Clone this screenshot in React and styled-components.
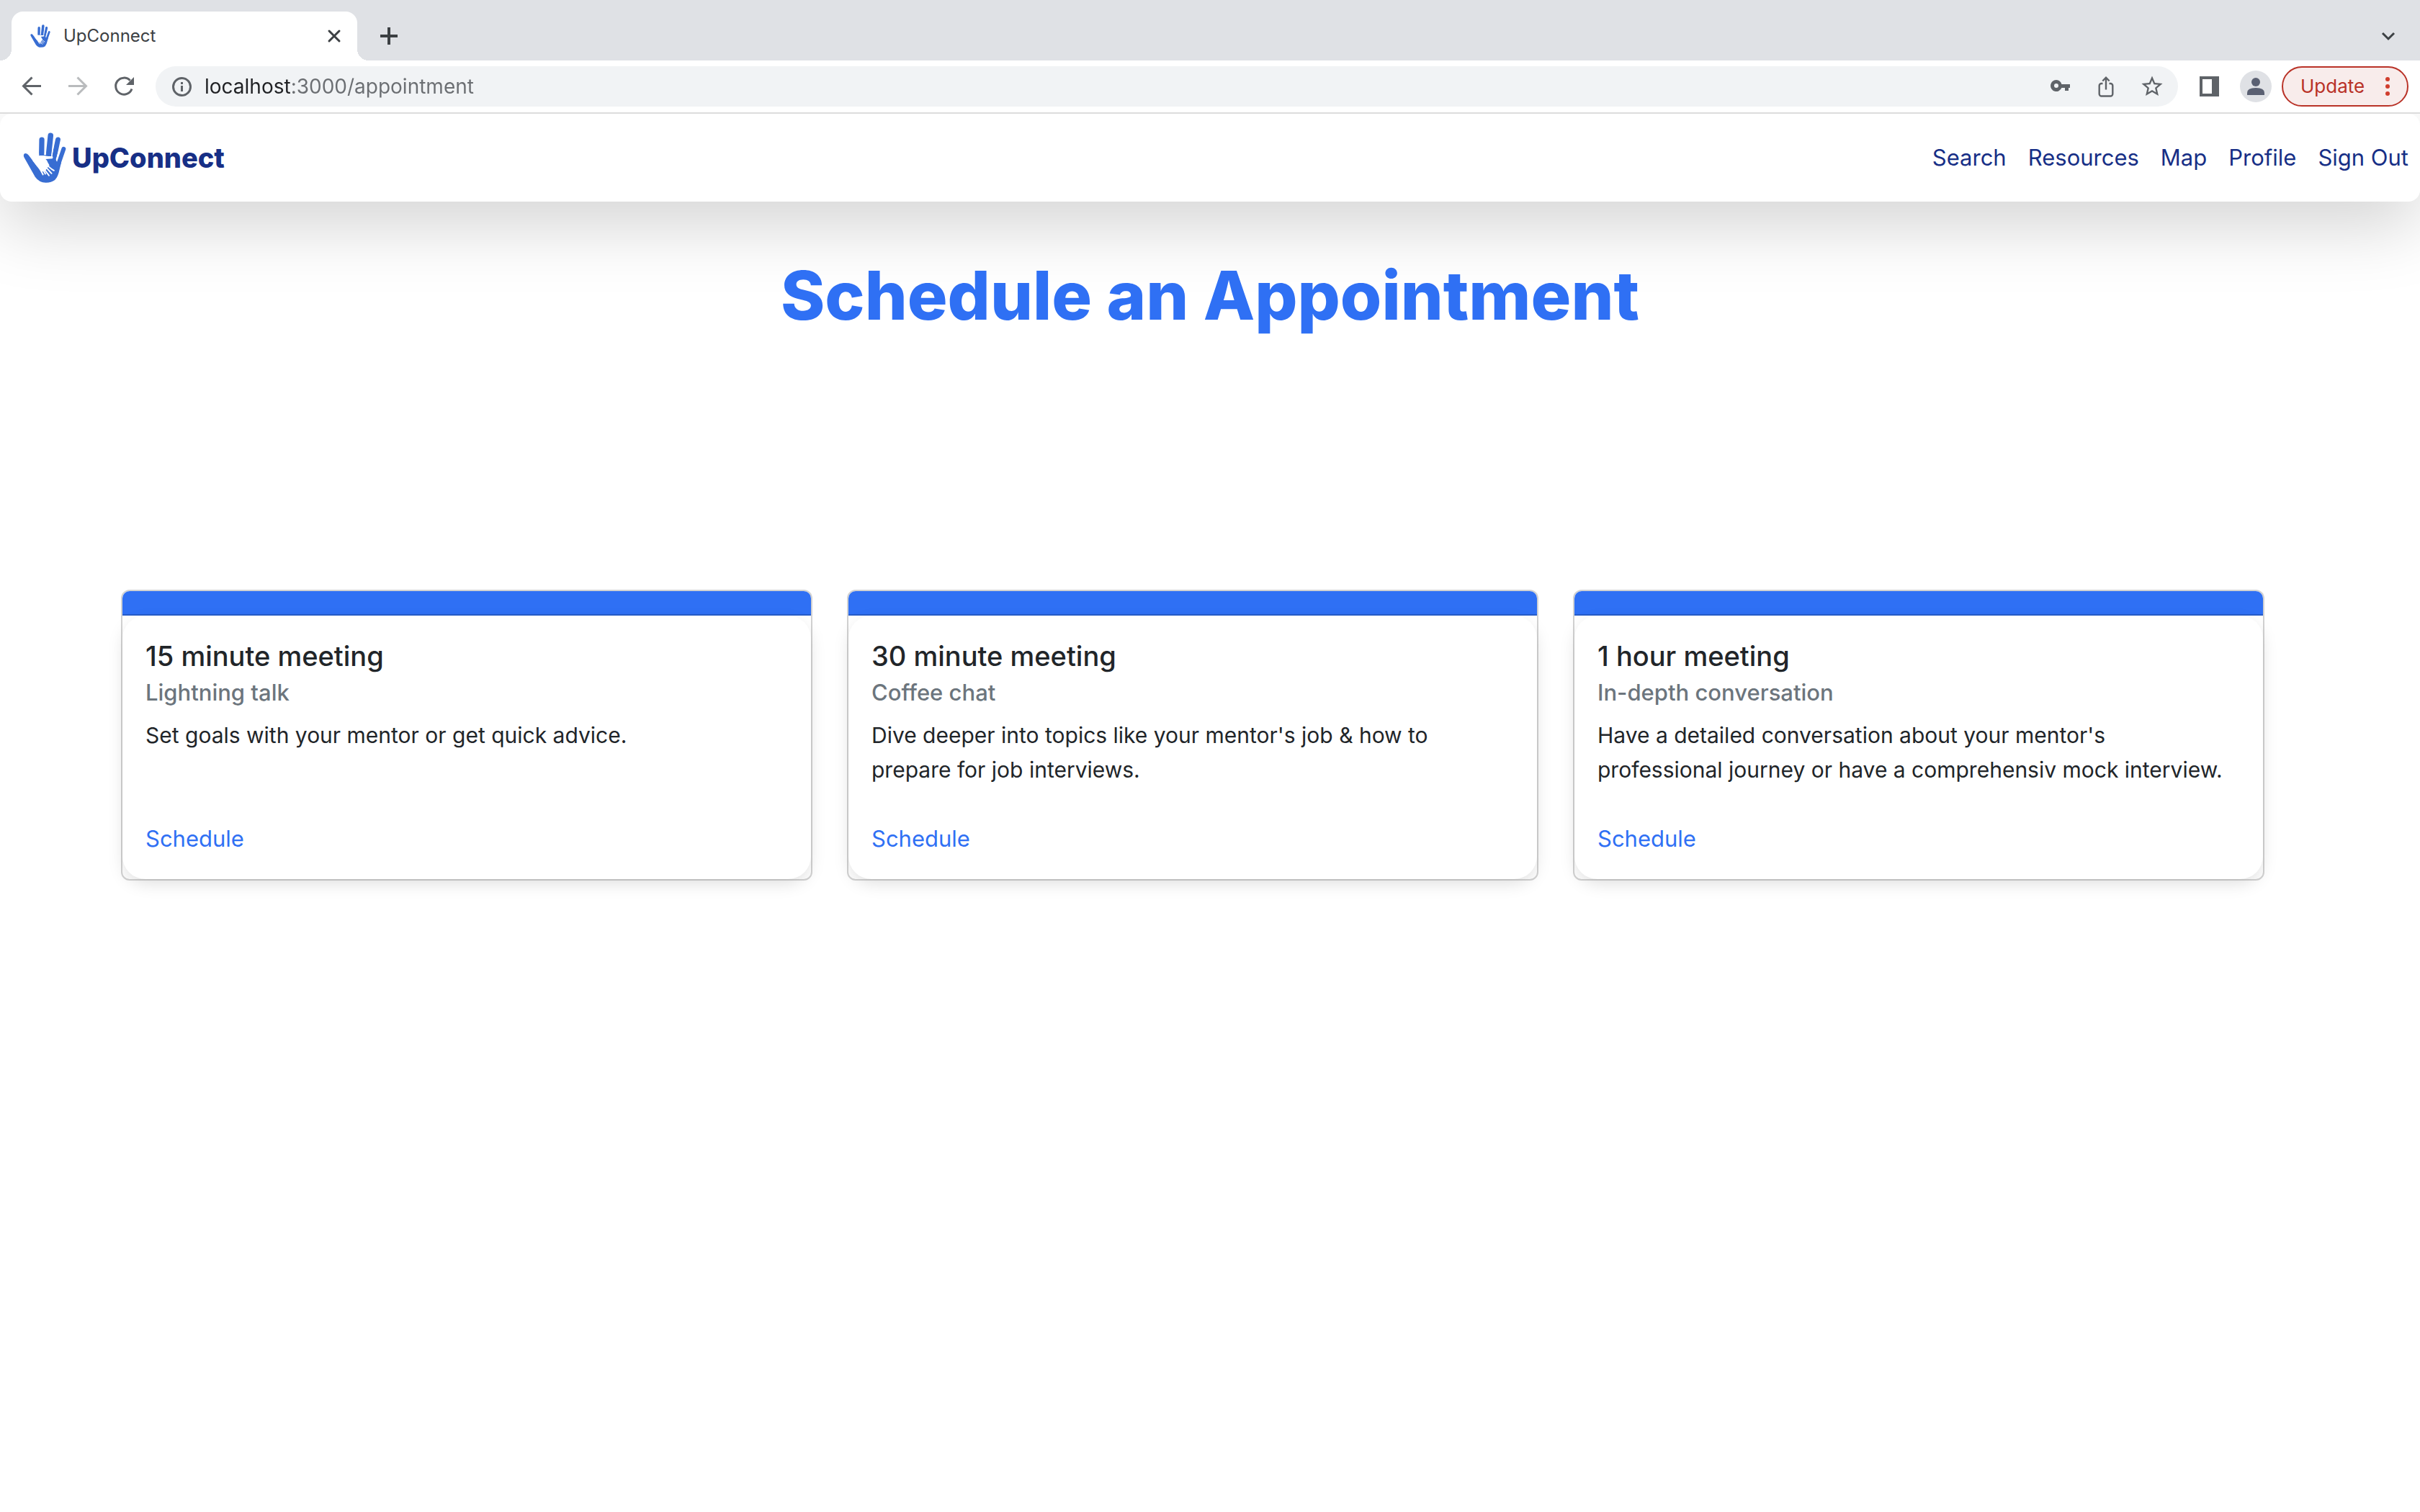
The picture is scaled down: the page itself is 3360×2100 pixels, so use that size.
import React, { useState } from 'react';
import styled, { createGlobalStyle } from 'styled-components';

const colors = {
  blue: '#2f70f4',
  navy: '#172f86',
  hand: '#386dd2',
  text: '#212529',
  muted: '#6c757d',
  chromeGray: '#dfe1e5',
  chromeIcon: '#5f6368',
  chromeDark: '#3c4043',
  red: '#b93227',
};

const GlobalStyle = createGlobalStyle`
  *, *::before, *::after { box-sizing: border-box; }
  body {
    margin: 0;
    background: #fff;
    color: ${colors.text};
    font-family: Inter, Roboto, "Liberation Sans", sans-serif;
  }
  h1, h2, h3, p, ul { margin: 0; padding: 0; }
  svg { display: block; }
`;

const Browser = styled.div`
  display: flex;
  flex-direction: column;
  min-height: 100vh;
`;

const Chrome = styled.header`
  position: relative;
  z-index: 2;
  background: #fff;
  border-bottom: 2px solid #dcdcdc;
`;

const TabStrip = styled.div`
  display: flex;
  align-items: center;
  height: 84px;
  padding: 16px 28px 0 16px;
  background: ${colors.chromeGray};
`;

const Tab = styled.div`
  position: relative;
  display: flex;
  align-items: center;
  gap: 18px;
  width: 480px;
  height: 68px;
  padding: 0 16px 0 26px;
  background: #fff;
  border-radius: 16px 16px 0 0;

  &::before,
  &::after {
    content: '';
    position: absolute;
    bottom: 0;
    width: 16px;
    height: 16px;
  }
  &::before {
    right: 100%;
    background: radial-gradient(circle at 0 0, transparent 16px, #fff 16px);
  }
  &::after {
    left: 100%;
    background: radial-gradient(circle at 100% 0, transparent 16px, #fff 16px);
  }
`;

const TabTitle = styled.span`
  flex: 1;
  font-size: 24px;
  line-height: 32px;
  color: ${colors.chromeDark};
`;

const IconButton = styled.button`
  display: grid;
  place-items: center;
  width: 32px;
  height: 32px;
  padding: 0;
  border: 0;
  background: none;
  color: ${(p) => (p.$dark ? colors.chromeDark : colors.chromeIcon)};
  cursor: pointer;

  &:disabled { color: #b9bbbd; }
`;

const NewTab = styled(IconButton)`
  margin: 0 auto 0 28px;
`;

const Toolbar = styled.div`
  display: flex;
  align-items: center;
  height: 72px;
  padding-right: 16px;
`;

const HistoryButtons = styled.div`
  display: flex;
  gap: 32px;
  padding: 0 28px;
`;

const AddressBar = styled.div`
  display: flex;
  flex: 1;
  align-items: center;
  height: 56px;
  padding: 0 20px;
  border-radius: 28px;
  background: #f1f3f5;
`;

const AddressInput = styled.input`
  flex: 1;
  min-width: 0;
  height: 40px;
  margin-left: 16px;
  padding: 0;
  border: 0;
  outline: 0;
  font: 400 28px/40px Inter, Roboto, sans-serif;
  color: ${colors.chromeIcon};
  background: linear-gradient(90deg, #202124 122px, #6b6e72 122px);
  background-clip: text;
  -webkit-background-clip: text;
  -webkit-text-fill-color: transparent;
`;

const AddressActions = styled.div`
  display: flex;
  gap: 32px;
`;

const ProfileTools = styled.div`
  display: flex;
  align-items: center;
  gap: 26px;
  padding: 0 14px 0 28px;
`;

const Avatar = styled.button`
  display: grid;
  place-items: center;
  width: 44px;
  height: 44px;
  padding: 0;
  border: 0;
  border-radius: 50%;
  background: ${colors.chromeGray};
  color: #5a6072;
`;

const UpdateButton = styled.button`
  display: flex;
  align-items: center;
  justify-content: space-between;
  width: 176px;
  height: 56px;
  padding: 0 24px;
  border: 2px solid ${colors.red};
  border-radius: 28px;
  background: #f8eceb;
  font: 400 26px/32px Inter, Roboto, sans-serif;
  color: ${colors.red};
`;

const SiteNav = styled.nav`
  position: relative;
  display: flex;
  align-items: center;
  justify-content: space-between;
  height: 122px;
  padding: 0 16px 0 32px;
  border-radius: 16px;
  background: #fff;
  box-shadow: 0 32px 96px rgba(0, 0, 0, 0.175);
`;

const Brand = styled.a`
  display: flex;
  align-items: center;
  gap: 8px;
  font-size: 38px;
  font-weight: 800;
  line-height: 48px;
  color: ${colors.navy};
  text-decoration: none;
`;

const NavList = styled.ul`
  display: flex;
  gap: 30px;
  list-style: none;
`;

const NavLink = styled.a`
  font-size: 31px;
  line-height: 48px;
  color: ${colors.navy};
  text-decoration: none;
`;

const Main = styled.main`
  position: relative;
  padding-top: 72px;
`;

const PageTitle = styled.h1`
  font-size: 93px;
  font-weight: 800;
  line-height: 116px;
  text-align: center;
  color: ${colors.blue};
`;

const CardGrid = styled.section`
  display: grid;
  grid-template-columns: repeat(3, 1fr);
  gap: 48px;
  margin-top: 351px;
  padding: 0 216px 0 168px;
`;

const Card = styled.article`
  display: flex;
  flex-direction: column;
  border: 2px solid rgba(0, 0, 0, 0.176);
  border-radius: 12px;
  background: #fff;
`;

const CardHeader = styled.div`
  height: 34px;
  border-bottom: 2px solid rgba(0, 0, 0, 0.176);
  border-radius: 10px 10px 0 0;
  background: ${colors.blue};
`;

const CardBody = styled.div`
  display: flex;
  flex: 1;
  flex-direction: column;
  align-items: flex-start;
  padding: 32px;
  border-radius: 32px;
  background: #fff;
  box-shadow: 0 8px 24px -4px rgba(0, 0, 0, 0.15);
`;

const CardTitle = styled.h2`
  font-size: 38px;
  font-weight: 500;
  line-height: 48px;
`;

const CardSubtitle = styled.h3`
  margin: 8px 0 16px;
  font-size: 31px;
  font-weight: 500;
  line-height: 38px;
  color: ${colors.muted};
`;

const CardText = styled.p`
  flex: 1;
  margin-bottom: 48px;
  padding-right: 16px;
  font-size: 30px;
  line-height: 48px;
`;

const CardLink = styled.a`
  font-size: 31px;
  line-height: 48px;
  color: ${colors.blue};
  text-decoration: none;
`;

const Hand = ({ width, height }) => (
  <svg width={width} height={height} viewBox="36 24 182 212" preserveAspectRatio="none" aria-hidden="true">
    <path
      fill={colors.hand}
      d="M40 128Q35 113 47 112Q54 112 60 120L96 168L103 123L103 118L132 118L156 122L172 135L180 150L197 150L189 182Q184 209 170 224Q156 235 132 235Q104 235 87 211Z"
    />
    <g stroke={colors.hand} strokeLinecap="round" fill="none">
      <path strokeWidth="22" d="M115 55L114 112" />
      <path strokeWidth="23" d="M152 37L143 124" />
      <path strokeWidth="21" d="M183 54L166 135" />
      <path strokeWidth="18" d="M207 93Q197 122 184 160" />
    </g>
    <path fill="#fff" d="M90 121L128 121Q134 125 160 124Q164 130 160 134L131 136Q137 139 140 150L147 162L128 187L112 189L76 142Z" />
    <g stroke="#fff" strokeLinecap="round" strokeWidth="6" fill="none">
      <path d="M106 174L120 201" />
      <path d="M118 176L130 198" />
      <path d="M122 174L145 205" />
      <path d="M128 165L156 196" />
      <path d="M134 155Q147 174 166 184" />
    </g>
    <path stroke="#fff" strokeWidth="5" fill="none" d="M130 56L130 119" />
    <path stroke="#fff" strokeWidth="4" fill="none" d="M167 56L157 124" />
    <path stroke="#fff" strokeWidth="4" fill="none" d="M194 80L176 138" />
  </svg>
);

const Line = ({ size = 32, width = 3, d, cap = 'butt' }) => (
  <svg width={size} height={size} viewBox="0 0 32 32" fill="none" stroke="currentColor" strokeWidth={width} strokeLinecap={cap} aria-hidden="true">
    <path d={d} />
  </svg>
);

const ReloadIcon = () => (
  <svg width="32" height="32" viewBox="0 0 32 32" fill="none" aria-hidden="true">
    <path d="M27 19.5A11.5 11.5 0 1 1 24.6 7.8" stroke="currentColor" strokeWidth="3" />
    <path d="M30 3V14H19Z" fill="currentColor" />
  </svg>
);

const InfoIcon = () => (
  <svg width="32" height="32" viewBox="0 0 32 32" fill="none" aria-hidden="true">
    <circle cx="16.5" cy="16.5" r="12" stroke="currentColor" strokeWidth="3" />
    <path d="M16.5 15V23M16.5 10V13" stroke="currentColor" strokeWidth="3" />
  </svg>
);

const KeyIcon = () => (
  <svg width="32" height="32" viewBox="0 0 32 32" aria-hidden="true">
    <path
      fill="currentColor"
      fillRule="evenodd"
      d="M11 7a8 8 0 1 0 7.4 11H23v4h5v-4h2v-5H18.4A8 8 0 0 0 11 7Zm0 5a3 3 0 1 1 0 6a3 3 0 0 1 0-6Z"
    />
  </svg>
);

const ShareIcon = () => (
  <svg width="32" height="32" viewBox="0 0 32 32" fill="none" stroke="currentColor" strokeWidth="2.4" aria-hidden="true">
    <path d="M11.5 12H9.7a3 3 0 0 0-3 3V26.500a3 3 0 0 0 3 3H22.300a3 3 0 0 0 3-3V15a3 3 0 0 0-3-3H20.500M16 20.500V4M11.300 8.500L16 3.700L20.700 8.500" />
  </svg>
);

const StarIcon = () => (
  <svg width="32" height="32" viewBox="1 1 22 22" aria-hidden="true">
    <path
      fill="currentColor"
      d="M22 9.24l-7.19-.62L12 2 9.19 8.63 2 9.24l5.46 4.73L5.82 21 12 17.27 18.18 21l-1.63-7.03L22 9.24zM12 15.4l-3.76 2.27 1-4.28-3.32-2.88 4.38-.38L12 6.100l1.710 4.040 4.380.38-3.320 2.880 1 4.280L12 15.400z"
    />
  </svg>
);

const SidePanelIcon = () => (
  <svg width="32" height="32" viewBox="0 0 32 32" aria-hidden="true">
    <path fill="currentColor" fillRule="evenodd" d="M2 2H29V30H2ZM6 6V26H19V6Z" />
  </svg>
);

const PersonIcon = () => (
  <svg width="44" height="44" viewBox="0 0 44 44" fill="currentColor" aria-hidden="true">
    <circle cx="22" cy="16" r="6" />
    <path d="M10 34V31Q10 24 22 24T34 31V34Z" />
  </svg>
);

const DotsIcon = () => (
  <svg width="6" height="28" viewBox="0 0 6 28" fill="#d03d2d" aria-hidden="true">
    <circle cx="3" cy="4" r="3" />
    <circle cx="3" cy="14" r="3" />
    <circle cx="3" cy="24" r="3" />
  </svg>
);

const links = ['Search', 'Resources', 'Map', 'Profile', 'Sign Out'];

const meetings = [
  {
    title: '15 minute meeting',
    subtitle: 'Lightning talk',
    text: 'Set goals with your mentor or get quick advice.',
  },
  {
    title: '30 minute meeting',
    subtitle: 'Coffee chat',
    text: "Dive deeper into topics like your mentor's job & how to prepare for job interviews.",
  },
  {
    title: '1 hour meeting',
    subtitle: 'In-depth conversation',
    text: "Have a detailed conversation about your mentor's professional journey or have a comprehensiv mock interview.",
  },
];

function BrowserChrome() {
  const [address, setAddress] = useState('localhost:3000/appointment');
  return (
    <Chrome>
      <TabStrip>
        <Tab>
          <Hand width={28} height={32} />
          <TabTitle>UpConnect</TabTitle>
          <IconButton $dark aria-label="Close tab">
            <Line d="M9 9L23 23M23 9L9 23" cap="round" />
          </IconButton>
        </Tab>
        <NewTab $dark aria-label="New tab">
          <Line d="M16 4V28M4 16H28" width={4} />
        </NewTab>
        <IconButton $dark aria-label="Search tabs">
          <Line d="M8 12L16 20L24 12" />
        </IconButton>
      </TabStrip>
      <Toolbar>
        <HistoryButtons>
          <IconButton aria-label="Back">
            <Line d="M29 15.5H5M16.5 3.5L4.5 15.5L16.5 27.5" />
          </IconButton>
          <IconButton aria-label="Forward" disabled>
            <Line d="M3 15.5H27M15.5 3.5L27.5 15.5L15.5 27.5" />
          </IconButton>
          <IconButton aria-label="Reload">
            <ReloadIcon />
          </IconButton>
        </HistoryButtons>
        <AddressBar>
          <IconButton aria-label="Site information">
            <InfoIcon />
          </IconButton>
          <AddressInput
            aria-label="Address"
            spellCheck={false}
            value={address}
            onChange={(e) => setAddress(e.target.value)}
          />
          <AddressActions>
            <IconButton aria-label="Passwords"><KeyIcon /></IconButton>
            <IconButton aria-label="Share"><ShareIcon /></IconButton>
            <IconButton aria-label="Bookmark"><StarIcon /></IconButton>
          </AddressActions>
        </AddressBar>
        <ProfileTools>
          <IconButton aria-label="Side panel"><SidePanelIcon /></IconButton>
          <Avatar aria-label="Profile"><PersonIcon /></Avatar>
        </ProfileTools>
        <UpdateButton>
          Update
          <DotsIcon />
        </UpdateButton>
      </Toolbar>
    </Chrome>
  );
}

export default function App() {
  return (
    <Browser>
      <GlobalStyle />
      <BrowserChrome />
      <SiteNav>
        <Brand href="#home">
          <Hand width={60} height={70} />
          UpConnect
        </Brand>
        <NavList>
          {links.map((name) => (
            <li key={name}>
              <NavLink href={`#${name}`}>{name}</NavLink>
            </li>
          ))}
        </NavList>
      </SiteNav>
      <Main>
        <PageTitle>Schedule an Appointment</PageTitle>
        <CardGrid>
          {meetings.map((m) => (
            <Card key={m.title}>
              <CardHeader />
              <CardBody>
                <CardTitle>{m.title}</CardTitle>
                <CardSubtitle>{m.subtitle}</CardSubtitle>
                <CardText>{m.text}</CardText>
                <CardLink href="#schedule">Schedule</CardLink>
              </CardBody>
            </Card>
          ))}
        </CardGrid>
      </Main>
    </Browser>
  );
}
